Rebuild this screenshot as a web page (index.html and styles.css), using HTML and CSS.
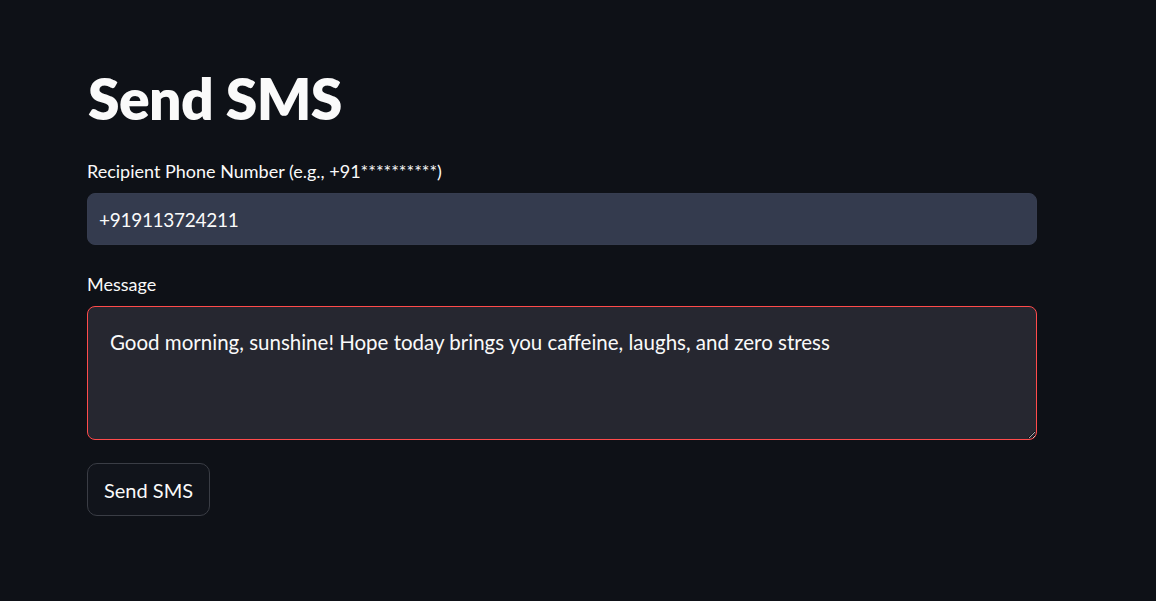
FILE: index.html
```html
<!DOCTYPE html>
<html>
<head>
<meta charset="utf-8">
<link rel="stylesheet" href="styles.css">
</head>
<body>
<main class="main">
  <h1 class="title">Send SMS</h1>
  <div class="field">
    <label class="label label-first">Recipient Phone Number (e.g., +91**********)</label>
    <input class="input" type="text" value="+919113724211">
  </div>
  <div class="field field-msg">
    <label class="label">Message</label>
    <textarea class="textarea">Good morning, sunshine! Hope today brings you caffeine, laughs, and zero stress</textarea>
  </div>
  <button class="button">Send SMS</button>
</main>
</body>
</html>
```
FILE: styles.css
```css
html, body {
  margin: 0;
  padding: 0;
  background: #0e1117;
  height: 100%;
}
body {
  font-family: Lato, "Liberation Sans", sans-serif;
  color: #fafafa;
}
.main {
  width: 950px;
  padding: 66px 0 0 87px;
  display: flex;
  flex-direction: column;
  align-items: flex-start;
}
.title {
  margin: 0 0 0 1px;
  font-size: 57px;
  font-weight: 800;
  line-height: 64px;
  letter-spacing: -0.6px;
}
.field {
  display: flex;
  flex-direction: column;
  width: 100%;
  margin-top: 30px;
}
.field-msg {
  margin-top: 28px;
}
.label {
  font-size: 18px;
  line-height: 22px;
  margin-bottom: 11px;
}
.input {
  box-sizing: border-box;
  width: 100%;
  height: 52px;
  border: 1px solid #363d50;
  border-radius: 8px;
  background: #343b4e;
  color: #fafafa;
  font-family: inherit;
  font-size: 19px;
  letter-spacing: -0.3px;
  padding: 0 11px;
  outline: none;
}
.textarea {
  box-sizing: border-box;
  width: 100%;
  height: 134px;
  border: 1px solid #ff4b4b;
  border-radius: 8px;
  background: #262730;
  color: #fafafa;
  font-family: inherit;
  font-size: 20.5px;
  line-height: 28px;
  padding: 21px 22px;
  outline: none;
  resize: vertical;
}
.button {
  margin-top: 23px;
  height: 53px;
  padding: 0 16px;
  background: #11141b;
  color: #fafafa;
  border: 1px solid #3a3d45;
  border-radius: 10px;
  font-family: inherit;
  font-size: 20px;
}
```
